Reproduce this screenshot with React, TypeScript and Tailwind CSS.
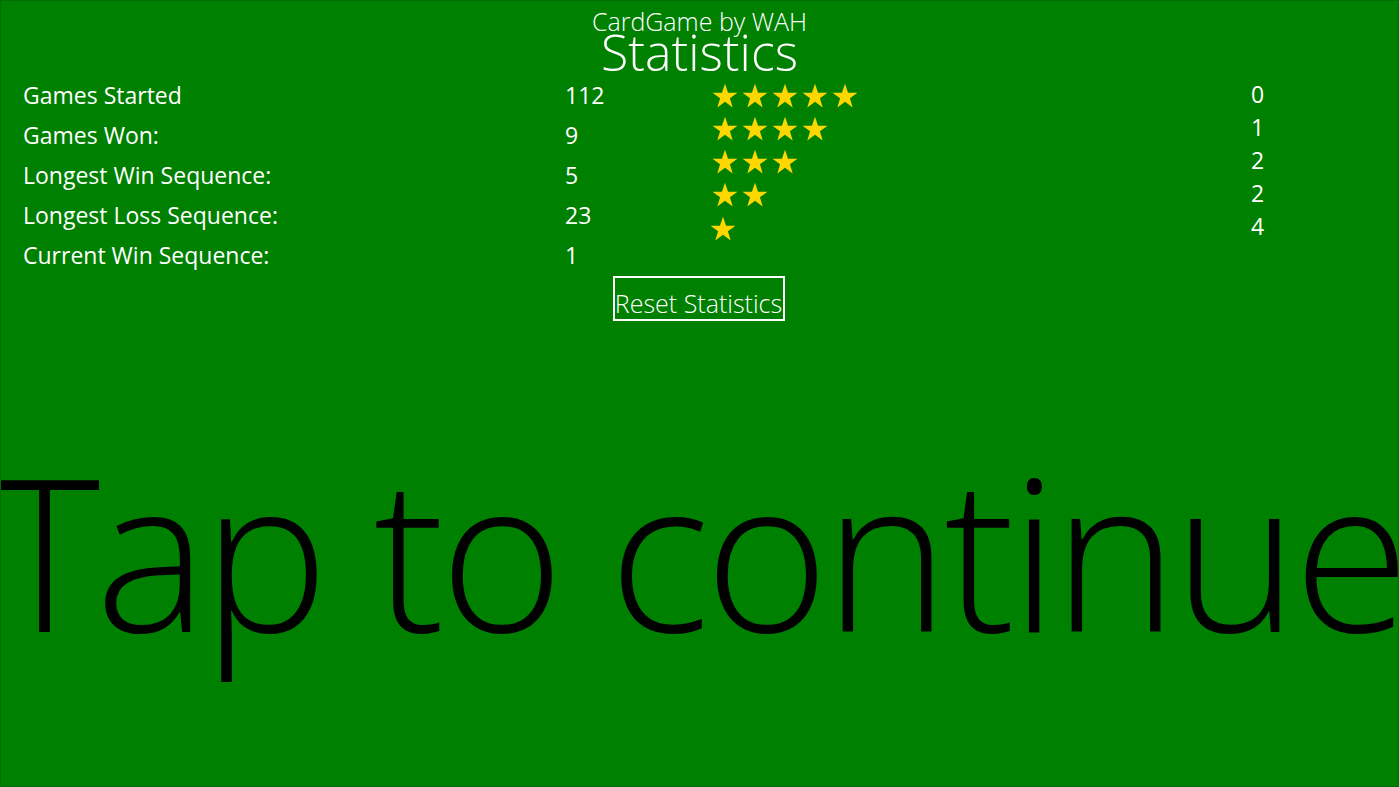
import React from "react";

const Star = () => (
  <svg width="28" height="28" viewBox="0 0 24 24" className="block">
    <polygon
      points="12,1.5 14.6,9.2 22.7,9.2 16.2,14 18.6,21.8 12,17 5.4,21.8 7.8,14 1.3,9.2 9.4,9.2"
      fill="#FFD700"
    />
  </svg>
);

const labels: [string, string][] = [
  ["Games Started", "112"],
  ["Games Won:", "9"],
  ["Longest Win Sequence:", "5"],
  ["Longest Loss Sequence:", "23"],
  ["Current Win Sequence:", "1"],
];

const starRows = [5, 4, 3, 2, 1];
const counts = ["0", "1", "2", "2", "4"];

export default function App() {
  return (
    <div
      className="w-[1399px] h-[787px] bg-[#008000] border border-[#006e00] overflow-hidden flex flex-col text-white"
      style={{ fontFamily: '"Open Sans", "Noto Sans", sans-serif' }}
    >
      <div className="flex flex-col items-center font-light">
        <div className="text-[25px] leading-[28px] mt-[6px]">CardGame by WAH</div>
        <div className="text-[50px] leading-[40px] mt-[-3px]">Statistics</div>
      </div>
      <div className="flex mt-[3px] pl-[22px]">
        <div className="grid grid-cols-[542px_146px]">
          {labels.map(([l, v]) => (
            <React.Fragment key={l}>
              <div className="h-[40px] flex items-center text-[23px]">{l}</div>
              <div className="h-[40px] flex items-center text-[23px]">{v}</div>
            </React.Fragment>
          ))}
        </div>
        <div className="w-[540px] flex flex-col pt-[4px]">
          {starRows.map((n, i) => (
            <div key={i} className={"h-[33px] flex items-center gap-[2px] " + (n === 1 ? "ml-[-2px] mt-[1px]" : "")}>
              {Array.from({ length: n }).map((_, j) => (
                <Star key={j} />
              ))}
            </div>
          ))}
        </div>
        <div className="flex flex-col pt-[3px]">
          {counts.map((c, i) => (
            <div key={i} className="h-[33px] flex items-center text-[23px]">
              {c}
            </div>
          ))}
        </div>
      </div>
      <div className="flex justify-center mt-[1px]">
        <button className="w-[172px] h-[45px] border-2 border-white text-[25px] font-light flex items-center justify-center ml-[-2px] pt-[10px]">
          Reset Statistics
        </button>
      </div>
      <div className="mt-[123px] text-black font-light text-[212px] leading-none whitespace-nowrap ml-[-12px] tracking-[-5px]">
        Tap to continue
      </div>
    </div>
  );
}
